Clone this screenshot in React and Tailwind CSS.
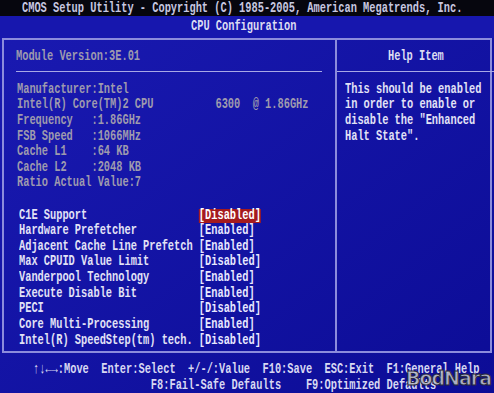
import React from 'react'

const Line = ({ children, className = '' }) => (
  <div className={`h-[15.65px] leading-[15.65px] whitespace-pre origin-left scale-x-[0.689] ${className}`}>
    {children}
  </div>
)

const info = [
  'Manufacturer:Intel',
  'Intel(R) Core(TM)2 CPU          6300  @ 1.86GHz',
  'Frequency   :1.86GHz',
  'FSB Speed   :1066MHz',
  'Cache L1    :64 KB',
  'Cache L2    :2048 KB',
  'Ratio Actual Value:7',
]

const settings = [
  ['C1E Support', '[Disabled]', true],
  ['Hardware Prefetcher', '[Enabled]'],
  ['Adjacent Cache Line Prefetch', '[Enabled]'],
  ['Max CPUID Value Limit', '[Disabled]'],
  ['Vanderpool Technology', '[Enabled]'],
  ['Execute Disable Bit', '[Enabled]'],
  ['PECI', '[Disabled]'],
  ['Core Multi-Processing', '[Enabled]'],
  ['Intel(R) SpeedStep(tm) tech.', '[Disabled]'],
]

const help = [
  'This should be enabled',
  'in order to enable or',
  'disable the "Enhanced',
  'Halt State".',
]

export default function App() {
  return (
    <div className="relative w-[494px] h-[393px] overflow-hidden bg-linear-to-br from-[#1a1ab2] to-[#0c0c96] font-['Liberation_Mono',monospace] text-[15px] font-bold text-[#e2e2f6]">
      {/* title bars */}
      <div className="h-[16px] bg-[#06060e] pl-[22px] pt-[1px] text-[#c8c8e0]">
        <Line>CMOS Setup Utility - Copyright (C) 1985-2005, American Megatrends, Inc.</Line>
      </div>
      <div className="h-[22px] bg-[#1717ae] pl-[191px] pt-[3px] text-[#dcdcf2]">
        <Line>CPU Configuration</Line>
      </div>

      {/* main frame */}
      <div className="ml-[2px] w-[490px] h-[315px] border-2 border-[#8c8cdc] flex">
        <div className="w-[333px] border-r-2 border-[#8c8cdc] pt-[9px]">
          <Line className="ml-[12px] text-[#9e9aae]">Module Version:3E.01</Line>
          <div className="mt-[6px] ml-[12px] mr-[13px] h-px bg-[#a8a8e6]" />
          <div className="mt-[10px] ml-[13px] text-[#9e9aae]">
            {info.map((t) => (
              <Line key={t}>{t}</Line>
            ))}
          </div>
          <div className="mt-[16.4px] ml-[15px]">
            {settings.map(([label, value, sel]) => (
              <Line key={label}>
                {label.padEnd(29, ' ')}
                {sel ? (
                  <span className="inline-block h-[14px] leading-[14px] bg-[#a41a1e] text-white">{value}</span>
                ) : (
                  <span className="text-[#e8e8ff]">{value}</span>
                )}
              </Line>
            ))}
          </div>
        </div>

        <div className="flex-1 pt-[9px]">
          <div className="pl-[51px] text-[#dcdcf2]">
            <Line>Help Item</Line>
          </div>
          <div className="mt-[6px] h-px bg-[#a8a8e6]" />
          <div className="mt-[10px] pl-[8px]">
            {help.map((t) => (
              <Line key={t}>{t}</Line>
            ))}
          </div>
        </div>
      </div>

      {/* footer */}
      <div className="pt-[9px] pl-[33px] text-[#d8d8f2]">
        <Line>{'↑↓←→:Move  Enter:Select  +/-/:Value  F10:Save  ESC:Exit  F1:General Help'}</Line>
        <Line>{'                   F8:Fail-Safe Defaults    F9:Optimized Defaults'}</Line>
      </div>

      {/* watermark */}
      <div className="absolute right-[3px] bottom-[1px] font-['DejaVu_Sans',sans-serif] text-[19px] font-bold tracking-[-1px] text-[#c4c4c8]/90 [-webkit-text-stroke:1px_#2a2a3a]">
        BodNara
      </div>
    </div>
  )
}
